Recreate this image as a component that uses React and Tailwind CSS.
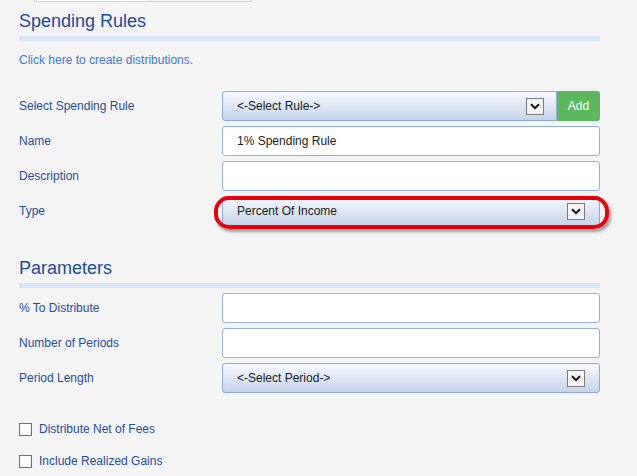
import React from "react";

const Chevron = () => (
  <span className="flex h-[17px] w-[18px] items-center justify-center border border-[#7a7a7a] bg-[#f4f4f4]">
    <svg width="10" height="7" viewBox="0 0 10 7" fill="none">
      <path d="M1 1.2 L5 5.2 L9 1.2" stroke="#111" strokeWidth="2" />
    </svg>
  </span>
);

const Select = ({ text, pr = "pr-[14px]", className = "" }) => (
  <div
    className={`flex h-[30px] flex-1 items-center justify-between rounded-[3px] border border-[#8eaad8] bg-gradient-to-b from-[#f7f9fd] to-[#c6d4eb] pl-[14px] ${pr} ${className}`}
  >
    <span className="text-[12px] text-[#1a1a1a]">{text}</span>
    <Chevron />
  </div>
);

const Input = ({ value = "" }) => (
  <div className="flex h-[30px] flex-1 items-center rounded-[3px] border border-[#94b0dd] bg-white pl-[14px] text-[12px] text-[#1a1a1a]">
    {value}
  </div>
);

const Row = ({ label, children }) => (
  <div className="flex h-[30px] items-center">
    <div className="-mt-[1px] w-[203px] text-[12px] text-[#1f4d9c]">{label}</div>
    <div className="flex flex-1">{children}</div>
  </div>
);

const Section = ({ title, className = "" }) => (
  <>
    <h2 className={`text-[18px] leading-[22px] text-[#1c4a99] ${className}`}>{title}</h2>
    <div className="mt-[4px] h-[5px] bg-[#d8e4f5]" />
  </>
);

const Check = ({ label, className = "" }) => (
  <div className={`flex h-[16px] items-center gap-[7px] ${className}`}>
    <span className="h-[13px] w-[13px] border border-[#6f6f6f] bg-[#fbfbfb]" />
    <span className="text-[12px] text-[#1f4d9c]">{label}</span>
  </div>
);

export default function App() {
  return (
    <div className="h-[476px] w-full bg-[#f4f4f4] font-['Liberation_Sans',Arial,sans-serif]">
      <div className="ml-[34px] flex h-[2px]">
        <div className="w-[116px] border border-t-0 border-[#d4d4d4] bg-white" />
        <div className="w-[102px] border border-l-0 border-t-0 border-[#d4d4d4] bg-[#f0f0f0]" />
      </div>

      <div className="w-[600px] pl-[19px]">
        <Section title="Spending Rules" className="mt-[8px]" />

        <p className="mt-[11px] text-[12px] leading-4 text-[#4179d3]">Click here to create distributions.</p>

        <div className="mt-[23px] flex flex-col gap-[5px]">
          <Row label="Select Spending Rule">
            <Select text="<-Select Rule->" pr="pr-[12px]" className="rounded-r-none" />
            <button className="h-[30px] w-[43px] rounded-r-[3px] bg-[#5cb85c] text-[12px] text-white">Add</button>
          </Row>
          <Row label="Name">
            <Input value="1% Spending Rule" />
          </Row>
          <Row label="Description">
            <Input />
          </Row>
          <Row label="Type">
            <div className="relative flex flex-1">
              <Select text="Percent Of Income" />
              <div className="pointer-events-none absolute -bottom-[3px] -left-[8px] -right-[9px] top-0 rounded-[15px] border-[4px] border-[#e8000b] shadow-[2px_3px_3px_rgba(0,0,0,0.35)]" />
            </div>
          </Row>
        </div>

        <Section title="Parameters" className="mt-[31px]" />

        <div className="mt-[5px] flex flex-col gap-[5px]">
          <Row label="% To Distribute">
            <Input />
          </Row>
          <Row label="Number of Periods">
            <Input />
          </Row>
          <Row label="Period Length">
            <Select text="<-Select Period->" />
          </Row>
        </div>

        <Check label="Distribute Net of Fees" className="mt-[28px]" />
        <Check label="Include Realized Gains" className="mt-[16px]" />
      </div>
    </div>
  );
}
